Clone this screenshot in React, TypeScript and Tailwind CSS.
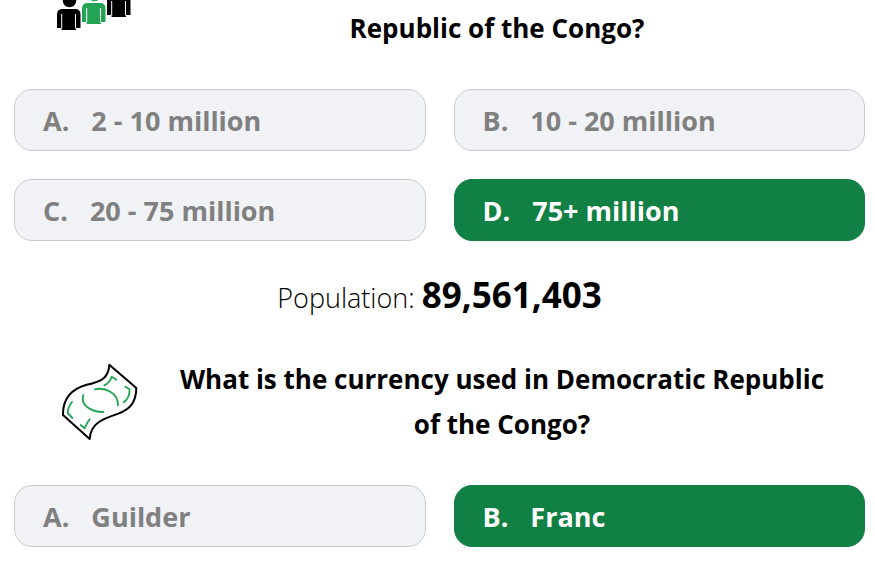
import type { ReactNode } from "react";
import clsx from "clsx";

type Option = { letter: string; text: string; correct?: boolean };

const populationOptions: Option[] = [
  { letter: "A", text: "2 - 10 million" },
  { letter: "B", text: "10 - 20 million" },
  { letter: "C", text: "20 - 75 million" },
  { letter: "D", text: "75+ million", correct: true },
];

const currencyOptions: Option[] = [
  { letter: "A", text: "Guilder" },
  { letter: "B", text: "Franc", correct: true },
];

function Person({ x, y, color }: { x: number; y: number; color: string }) {
  return (
    <g transform={`translate(${x} ${y})`} fill={color}>
      <circle cx="12.5" cy="-8.5" r="6.8" />
      <path d="M0 19V5.5Q0 0 5.5 0H18Q23.5 0 23.5 5.5V19H19V21H4.5V19Z" />
      <path d="M4.7 5V19.5M18.5 5V19.5" stroke="#fff" strokeWidth="1" />
    </g>
  );
}

function PeopleIcon() {
  return (
    <svg viewBox="57 0 76 30" className="h-[30px] w-[76px] shrink-0" aria-hidden="true">
      <Person x={57} y={9} color="#000" />
      <Person x={82} y={3} color="#23a455" />
      <Person x={107} y={-4} color="#000" />
    </svg>
  );
}

function MoneyIcon() {
  return (
    <svg
      viewBox="36 36 228 234"
      className="h-[78px] w-[76px] shrink-0"
      fill="none"
      strokeLinecap="round"
      strokeLinejoin="round"
      aria-hidden="true"
    >
      <path
        d="M178 41L259 111C258 155 240 175 205 188C160 203 122 215 119 264L39 192C38 145 60 115 110 101C155 92 176 80 178 41Z"
        stroke="#000"
        strokeWidth="6"
      />
      <g stroke="#23a455" strokeWidth="5.5">
        <path d="M134 115C165 108 205 125 204 163" />
        <path d="M100 132C90 160 120 183 160 183" />
        <path d="M163 103C175 97 181 90 185 77L199 86" />
        <path d="M226 107L239 115C239 130 233 146 221 154" />
        <path d="M66 153Q54 168 53 186L67 201" />
        <path d="M119 205Q109 217 104 232L92 222" />
      </g>
    </svg>
  );
}

function Question({ icon, children, className }: { icon: ReactNode; children: ReactNode; className?: string }) {
  return (
    <div className={clsx("flex gap-6 pb-[38px]", className)}>
      {icon}
      <h2 className="flex-1 px-2 text-center text-[26px] leading-[45px] font-bold text-black">{children}</h2>
    </div>
  );
}

function Options({ options }: { options: Option[] }) {
  return (
    <div className="grid grid-cols-2 gap-7 pr-[10px] pl-[14px]">
      {options.map((option) => (
        <button
          key={option.letter}
          type="button"
          className={clsx(
            "flex h-[62px] items-center gap-[22px] rounded-[18px] border px-7 pt-0.5 text-left text-[27px] font-bold",
            option.correct
              ? "border-[#118044] bg-[#118044] text-white"
              : "border-[#c8cccc] bg-[#f0f2f5] text-[#808080]"
          )}
        >
          <span>{option.letter}.</span>
          <span>{option.text}</span>
        </button>
      ))}
    </div>
  );
}

export default function App() {
  return (
    <main className="bg-white font-['Open_Sans','Noto_Sans',sans-serif]">
      <section>
        <Question icon={<PeopleIcon />} className="pr-[38px] pl-[57px]">
          <span className="block pt-1.5">Republic of the Congo?</span>
        </Question>
        <Options options={populationOptions} />
        <p className="pt-7 pr-[10px] pl-[14px] text-center text-[27px] leading-[52px] font-light text-black">
          Population: <strong className="text-[35px] font-bold">89,561,403</strong>
        </p>
      </section>

      <section className="pt-[33px]">
        <Question icon={<MoneyIcon />} className="items-center pr-[33px] pl-[62px]">
          What is the currency used in Democratic Republic of the Congo?
        </Question>
        <Options options={currencyOptions} />
      </section>
    </main>
  );
}
